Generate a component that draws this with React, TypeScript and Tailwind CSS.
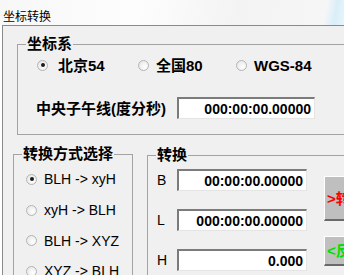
import type { ReactNode } from "react";

const cjk = "font-['Liberation_Sans','Noto_Sans_CJK_SC',sans-serif]";

function Radio({ checked = false }: { checked?: boolean }) {
  return (
    <span className="w-[11px] h-[11px] shrink-0 rounded-full border border-[#b4b4b4] bg-[radial-gradient(circle_at_65%_65%,#ffffff,#e2e2e2)] flex items-center justify-center">
      {checked && <span className="w-[4px] h-[4px] rounded-full bg-[#1c1c1c]" />}
    </span>
  );
}

function Group({ label, className, children }: { label: string; className: string; children: ReactNode }) {
  return (
    <div className={`relative shrink-0 border border-[#a3a3a3] ${className}`}>
      <span className={`absolute left-[8px] -top-[10px] px-[1px] bg-[#f0f0f0] text-[15px] leading-[18px] font-bold ${cjk}`}>
        {label}
      </span>
      {children}
    </div>
  );
}

function Field({ value, className }: { value: string; className: string }) {
  return (
    <div
      className={`h-[22px] flex items-center justify-end pr-[3px] bg-white border-t-2 border-l-2 border-[#7b7b7b] border-b border-r border-b-[#e4e4e4] border-r-[#e4e4e4] text-[14px] font-bold leading-none font-['Liberation_Sans',sans-serif] ${className}`}
    >
      {value}
    </div>
  );
}

export default function App() {
  const modes = ["BLH -> xyH", "xyH -> BLH", "BLH -> XYZ", "XYZ -> BLH"];
  const rows = [
    { k: "B", v: "00:00:00.00000" },
    { k: "L", v: "000:00:00.00000" },
    { k: "H", v: "0.000" },
  ];

  return (
    <div className="w-[344px] h-[275px] overflow-hidden flex flex-col bg-white text-black">
      <div className="h-[25px] shrink-0 pl-[3px] pt-[3px] bg-[linear-gradient(100deg,#f7f7f7_0%,#fdfdfd_40%,#f3f3f3_70%,#f6f6f6_94%,#d9eef9_97%,#e8f5fb_100%)]">
        <span className={`text-[12px] leading-[16px] ${cjk}`}>坐标转换</span>
      </div>

      <div className="flex-1 ml-[2px] border-t border-l border-[#8a8a8a] bg-[#f0f0f0] overflow-hidden">
        <Group label="坐标系" className="ml-[14px] mt-[18px] w-[360px] h-[91px]">
          <div className={`flex items-center h-[16px] mt-[12px] ml-[19px] text-[15px] font-bold leading-none ${cjk}`}>
            <div className="w-[101px] flex items-center gap-[10px]">
              <Radio checked />
              <span>北京54</span>
            </div>
            <div className="w-[98px] flex items-center gap-[7px]">
              <Radio />
              <span>全国80</span>
            </div>
            <div className="flex items-center gap-[7px]">
              <Radio />
              <span className="font-['Liberation_Sans',sans-serif]">WGS-84</span>
            </div>
          </div>
          <div className="flex items-center h-[22px] mt-[24px] ml-[18px]">
            <span className={`w-[141px] text-[15px] font-bold leading-none ${cjk}`}>中央子午线(度分秒)</span>
            <Field value="000:00:00.00000" className="w-[138px]" />
          </div>
        </Group>

        <div className="flex items-start mt-[19px] ml-[10px]">
          <Group label="转换方式选择" className="w-[120px] h-[140px]">
            <div className="flex flex-col pt-[9px] pl-[12px]">
              {modes.map((m, i) => (
                <div key={m} className="h-[30.7px] flex items-center gap-[7px]">
                  <Radio checked={i === 0} />
                  <span className="text-[14px] leading-none font-['Liberation_Sans',sans-serif]">{m}</span>
                </div>
              ))}
            </div>
          </Group>

          <Group label="转换" className="ml-[14px] mt-[1px] w-[240px] h-[140px]">
            <div className="flex">
              <div className="flex flex-col gap-[18px] pt-[13px] pl-[9px]">
                {rows.map((r) => (
                  <div key={r.k} className="flex items-center">
                    <span className="w-[20px] text-[14px] leading-none font-['Liberation_Sans',sans-serif]">{r.k}</span>
                    <Field value={r.v} className="w-[130px]" />
                  </div>
                ))}
              </div>
              <div className={`flex flex-col gap-[15px] pt-[20px] ml-[17px] text-[15px] font-bold leading-none ${cjk}`}>
                <button className="w-[60px] h-[45px] pl-[2px] flex items-center bg-[#bfbfbf] border-t border-l border-white border-b-2 border-b-[#696969] text-[#ff0000]">
                  &gt;转换
                </button>
                <button className="w-[60px] h-[30px] pl-[2px] flex items-center bg-[#bfbfbf] border-t border-l border-white border-b-2 border-b-[#696969] text-[#00e000]">
                  &lt;反算
                </button>
              </div>
            </div>
          </Group>
        </div>
      </div>
    </div>
  );
}
